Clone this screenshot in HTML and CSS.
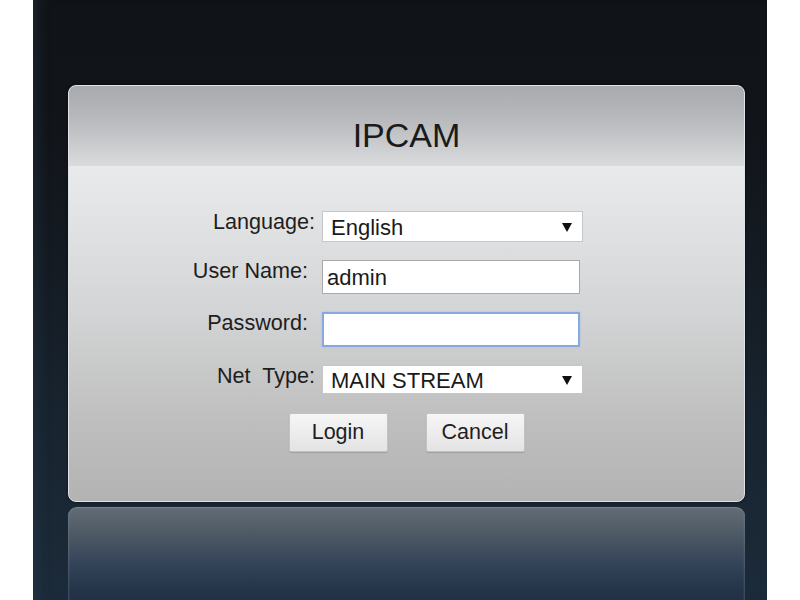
FILE: index.html
```html
<!DOCTYPE html>
<html lang="en">
<head>
    <meta charset="UTF-8">
    <meta name="viewport" content="width=device-width, initial-scale=1.0">
    <title>IPCAM - Login</title>
    <link rel="stylesheet" href="styles.css">
</head>
<body>
    <div class="stage">
        <div class="panel">
            <div class="panel-head">IPCAM</div>
            <form class="login-form" onsubmit="return false;">
                <div class="row">
                    <label class="label" for="lang">Language:</label>
                    <div class="select-wrap">
                        <select id="lang" class="field-select">
                            <option>English</option>
                        </select>
                        <span class="arrow"></span>
                    </div>
                </div>
                <div class="row row-user">
                    <label class="label label-text" for="user">User Name:</label>
                    <input type="text" id="user" class="field-text" value="admin">
                </div>
                <div class="row row-pass">
                    <label class="label label-text" for="pass">Password:</label>
                    <input type="password" id="pass" class="field-text field-focus">
                </div>
                <div class="row row-net">
                    <label class="label" for="net">Net&nbsp; Type:</label>
                    <div class="select-wrap select-net">
                        <select id="net" class="field-select">
                            <option>MAIN STREAM</option>
                        </select>
                        <span class="arrow"></span>
                    </div>
                </div>
                <div class="buttons">
                    <button type="submit" class="btn">Login</button>
                    <button type="button" class="btn">Cancel</button>
                </div>
            </form>
        </div>
        <div class="reflection"></div>
    </div>
</body>
</html>
```

FILE: styles.css
```css
/* General */
body {
    margin: 0;
    padding: 0;
    background-color: #ffffff;
    font-family: "Liberation Sans", Arial, sans-serif;
    color: #222;
}

.stage {
    margin-left: 33px;
    width: 734px;
    height: 600px;
    box-sizing: border-box;
    padding: 85px 22px 0 35px;
    overflow: hidden;
    background: linear-gradient(#101317 0%, #111419 18%, #141b23 45%, #18242f 70%, #1c2b3a 100%);
    box-shadow: inset 14px 0 12px -8px rgba(40, 60, 80, 0.35);
}

/* Panel */
.panel {
    height: 417px;
    box-sizing: border-box;
    border: 1px solid #dfe3e7;
    border-radius: 8px;
    overflow: hidden;
    background: linear-gradient(#f0f2f4 0%, #e6e7e8 25%, #d3d4d5 55%, #bfbfbf 80%, #b3b3b3 100%);
    box-shadow: 0 0 3px rgba(0, 0, 0, 0.6);
}

.panel-head {
    height: 80px;
    box-sizing: border-box;
    padding-top: 30px;
    text-align: center;
    font-size: 34px;
    color: #1a1a1a;
    background: linear-gradient(#a8aaad 0%, #b9bbbe 45%, #d9dbdd 100%);
}

/* Form */
.login-form {
    padding-top: 45px;
}

.row {
    display: flex;
    align-items: flex-start;
    margin-bottom: 18px;
}

.label {
    width: 246px;
    margin-top: -1px;
    margin-right: 7px;
    text-align: right;
    font-size: 21.6px;
    line-height: 24px;
    color: #1e1e1e;
}

.label-text {
    width: 239px;
    margin-right: 14px;
}

.select-wrap {
    position: relative;
    width: 261px;
    height: 31px;
}

.select-net {
    height: 29px;
}

.field-select {
    appearance: none;
    -webkit-appearance: none;
    width: 100%;
    height: 100%;
    margin: 0;
    padding: 2px 0 0 8px;
    border: 1px solid #c6c6c6;
    border-radius: 0;
    background: #ffffff;
    font-family: "Liberation Sans", Arial, sans-serif;
    font-size: 22px;
    color: #1a1a1a;
    box-sizing: border-box;
}

.arrow {
    position: absolute;
    right: 11px;
    top: 50%;
    margin-top: -4px;
    width: 0;
    height: 0;
    border-left: 5px solid transparent;
    border-right: 5px solid transparent;
    border-top: 9px solid #111;
    pointer-events: none;
}

.field-text {
    width: 258px;
    height: 34px;
    margin: 0;
    padding: 2px 4px 0;
    border: 1px solid #a9a9a9;
    background: #ffffff;
    font-family: "Liberation Sans", Arial, sans-serif;
    font-size: 22px;
    color: #1a1a1a;
    box-sizing: border-box;
    outline: none;
}

.row-pass .field-text {
    height: 35px;
}

.field-focus {
    border: 2px solid #88a9e0;
    box-shadow: 0 0 2px #a9c2ee;
}

/* Buttons */
.buttons {
    display: flex;
    justify-content: center;
    gap: 38px;
    padding-top: 1px;
}

.btn {
    width: 99px;
    height: 39px;
    padding: 0;
    border: 1px solid #c3c3c3;
    border-radius: 2px;
    background: linear-gradient(#f6f6f6, #e3e3e3);
    box-shadow: 0 1px 1px rgba(0, 0, 0, 0.15);
    font-family: "Liberation Sans", Arial, sans-serif;
    font-size: 21.5px;
    color: #1e1e1e;
    cursor: pointer;
}

/* Reflection under the panel */
.reflection {
    height: 110px;
    margin-top: 5px;
    border-radius: 9px 9px 0 0;
    border-top: 1px solid #7d868d;
    background: linear-gradient(#616c75 0%, #4c5863 25%, #34445a 50%, #233448 75%, #1f2f41 100%);
    box-shadow: inset 2px 0 2px -1px rgba(130, 145, 160, 0.35), inset -2px 0 2px -1px rgba(130, 145, 160, 0.35);
}
```
